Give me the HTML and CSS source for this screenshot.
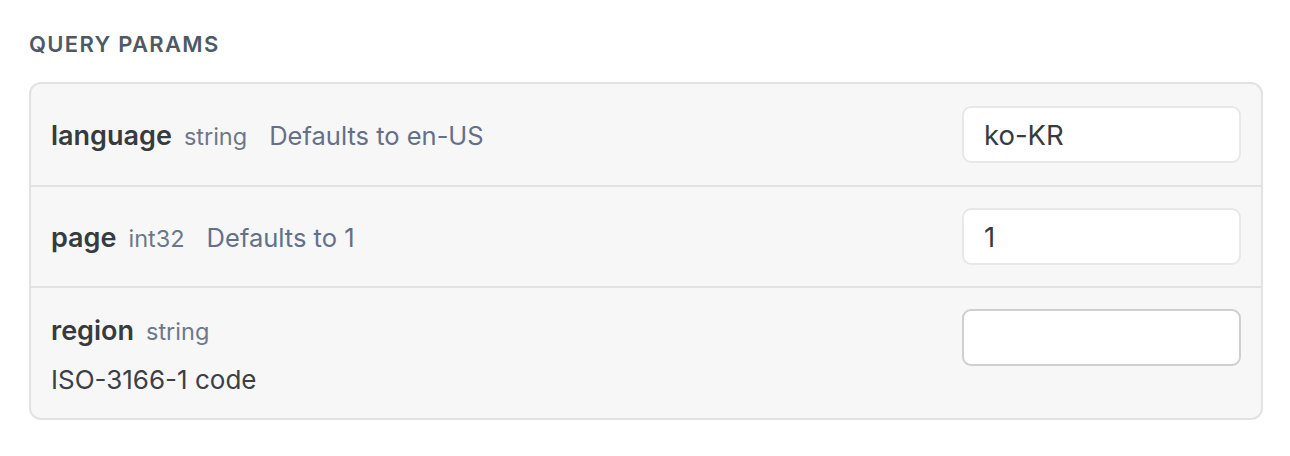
FILE: index.html
```html
<!DOCTYPE html>
<html>
<head>
<meta charset="utf-8">
<link rel="stylesheet" href="styles.css">
</head>
<body>
<section class="params">
  <h2 class="params-title">Query Params</h2>
  <div class="params-card">
    <div class="param-row">
      <div class="param-info">
        <div class="param-head">
          <span class="param-name">language</span>
          <span class="param-type">string</span>
          <span class="param-default">Defaults to en-US</span>
        </div>
      </div>
      <input class="param-input" type="text" value="ko-KR">
    </div>
    <div class="param-row">
      <div class="param-info">
        <div class="param-head">
          <span class="param-name">page</span>
          <span class="param-type">int32</span>
          <span class="param-default">Defaults to 1</span>
        </div>
      </div>
      <input class="param-input" type="text" value="1">
    </div>
    <div class="param-row param-row-top">
      <div class="param-info">
        <div class="param-head">
          <span class="param-name">region</span>
          <span class="param-type">string</span>
        </div>
        <div class="param-desc">ISO-3166-1 code</div>
      </div>
      <input class="param-input param-input-empty" type="text" value="">
    </div>
  </div>
</section>
</body>
</html>
```

FILE: styles.css
```css
* { box-sizing: border-box; }
html, body { margin: 0; padding: 0; background: #fff; }
body {
  font-family: Inter, "Noto Sans", sans-serif;
  -webkit-font-smoothing: antialiased;
}
.params {
  padding: 30px 27px 0 29px;
}
.params-title {
  margin: 0 0 24px 0;
  font-size: 22px;
  font-weight: 600;
  letter-spacing: 1.3px;
  text-transform: uppercase;
  color: #4f5966;
  line-height: 28px;
}
.params-card {
  border: 2px solid #e2e2e2;
  border-radius: 12px;
  background: #f7f7f7;
  overflow: hidden;
}
.param-row {
  display: flex;
  align-items: center;
  justify-content: space-between;
  gap: 20px;
  padding: 21px 20px 21px 20px;
  min-height: 101px;
}
.param-row + .param-row {
  border-top: 2px solid #e2e2e2;
}
.param-row-top {
  align-items: flex-start;
  padding-bottom: 22px;
}
.param-info {
  display: flex;
  flex-direction: column;
  padding-top: 3px;
}
.param-head {
  display: flex;
  align-items: baseline;
  line-height: 32px;
}
.param-row-top .param-head {
  margin-top: 3px;
}
.param-name {
  font-size: 27px;
  font-weight: 600;
  color: #363b40;
}
.param-type {
  font-size: 23.5px;
  color: #6c788a;
  margin-left: 12px;
}
.param-default {
  font-size: 25.5px;
  color: #637088;
  margin-left: 22px;
}
.param-desc {
  font-size: 26px;
  line-height: 32px;
  margin-top: 16px;
  color: #3b4045;
}
.param-input {
  width: 279px;
  height: 57px;
  border: 2px solid #e8e8e8;
  border-radius: 9px;
  background: #fff;
  padding: 0 20px;
  font-family: inherit;
  font-size: 27.5px;
  color: #363b40;
  outline: none;
  flex-shrink: 0;
}
.param-input-empty {
  border-color: #cfcfcf;
}
```
